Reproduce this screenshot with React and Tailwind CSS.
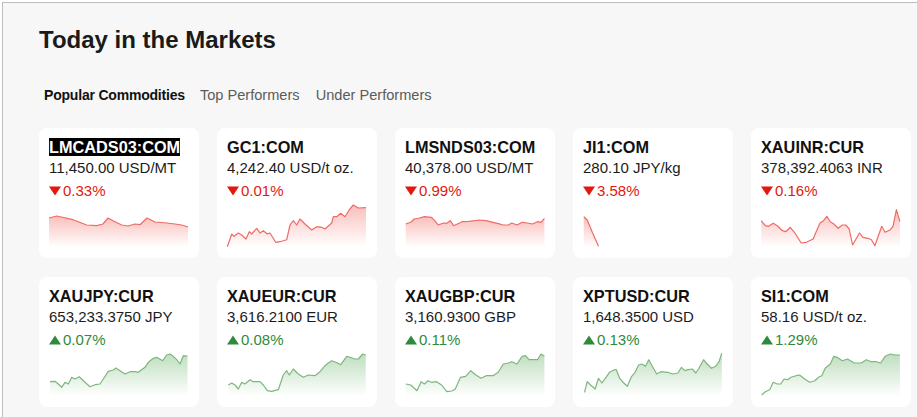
import React from 'react';

const RED = { line: '#ee6b66', fill: '#f7a9a5', text: 'text-[#e3170d]' };
const GREEN = { line: '#7fb67f', fill: '#a9d3a9', text: 'text-[#2f8a3b]' };

const items = [
  {
    id: 'lmcads',
    ticker: 'LMCADS03:COM',
    price: '11,450.00 USD/MT',
    change: '0.33%',
    up: false,
    selected: true,
    pts: [[0,16],[7.7,14],[24,17.7],[37.7,23],[47.7,23.7],[54,22],[59,16],[64,18.7],[72.7,23],[79,24],[86,22],[91,22.7],[98,16],[106,20],[117.7,21],[126,22],[132.7,23],[139,25]],
  },
  {
    id: 'gc1',
    ticker: 'GC1:COM',
    price: '4,242.40 USD/t oz.',
    change: '0.01%',
    up: false,
    pts: [[0.3,44.7],[4.7,32],[7,34.3],[11.3,31],[14.7,33],[19,37],[22.3,29.7],[24.7,32],[29.7,26.3],[33,31],[36.3,28.7],[40.3,32],[43,31],[48.7,40.3],[53,39.7],[59.7,37.7],[63,23],[66.3,18.7],[69.7,23],[73,17],[78,22],[84.7,28],[89.7,24.7],[94.7,25.3],[98,27],[104.7,21],[106.3,14.7],[109.7,14.7],[113.7,11.3],[118,14.7],[122.3,7.7],[126.3,3],[131.3,6],[139,5.7]],
  },
  {
    id: 'lmsnds',
    ticker: 'LMSNDS03:COM',
    price: '40,378.00 USD/MT',
    change: '0.99%',
    up: false,
    pts: [[0.7,22],[5.8,20.3],[9.2,17],[14.4,16],[19.5,14.7],[26.4,15.3],[29.8,18.7],[33.2,23],[38.4,21],[41.8,21.3],[45.2,18.7],[48.6,23.7],[57.2,19.7],[64,19.3],[74.3,18],[81.2,18.7],[88,20.3],[93.2,21.7],[98.3,23],[103.4,23],[106.8,21],[112,23],[117.1,20.3],[122.3,21],[127.4,22],[132.5,19.7],[136,20.3],[139.4,16.3]],
  },
  {
    id: 'ji1',
    ticker: 'JI1:COM',
    price: '280.10 JPY/kg',
    change: '3.58%',
    up: false,
    pts: [[0.8,14.7],[4.2,18],[9.3,30.3],[15.5,44.3]],
  },
  {
    id: 'xauinr',
    ticker: 'XAUINR:CUR',
    price: '378,392.4063 INR',
    change: '0.16%',
    up: false,
    pts: [[0.2,18.7],[4.3,23.7],[7.7,24.3],[12.2,21.3],[16.3,23.7],[21.4,28.7],[24.8,29.7],[29.3,25.3],[33.4,30.3],[40.2,41],[45.4,40.3],[52.2,37],[55.6,28.7],[59.1,21],[62.5,18.7],[65.9,14.3],[69.3,19.7],[72.8,22],[77.2,26.3],[81.3,23],[84.8,23],[88.2,27],[91.6,43],[98.5,31],[101.9,35.3],[107,36.3],[110.4,37.7],[113.9,43.7],[120.7,24.3],[124.1,30.3],[129.3,27.7],[132,24.3],[135.4,7.7],[138.9,19.7]],
  },
  {
    id: 'xaujpy',
    ticker: 'XAUJPY:CUR',
    price: '653,233.3750 JPY',
    change: '0.07%',
    up: true,
    pts: [[1,30.7],[6,30.3],[9.3,33],[12.7,36.3],[16,31.3],[19.3,33],[22.7,26.3],[26,28],[30.3,25.7],[36,31.3],[41,35.7],[46,33.7],[51,33],[54.3,28],[59.3,20.3],[64.3,19],[67,17],[71,19.7],[76,23],[81,20.7],[86,20.7],[89.3,21.3],[96,16.3],[99.3,11.3],[104.3,7.3],[107.7,6.3],[113.7,9.7],[117.7,4],[121,3],[124.3,5.3],[127.7,8.7],[131,13],[134.3,4.7],[138.5,5]],
  },
  {
    id: 'xaueur',
    ticker: 'XAUEUR:CUR',
    price: '3,616.2100 EUR',
    change: '0.08%',
    up: true,
    pts: [[1.3,34],[4.7,32],[8,34],[11.3,38],[14.7,31.3],[18,33],[23,28.7],[26.3,30.7],[33,30.7],[36.3,34],[40.3,39.7],[44.7,40.3],[51.3,38.7],[56.3,24],[59.7,19.7],[62.3,24],[66.3,18],[71.3,23],[76.3,26.3],[81.3,24],[88,24.7],[93,20.7],[98,14.7],[101.3,12],[104.7,9.7],[109,11.3],[113.7,13.7],[119.7,5.3],[123,6.3],[128,8],[131.3,8],[135.7,3],[138.7,4]],
  },
  {
    id: 'xaugbp',
    ticker: 'XAUGBP:CUR',
    price: '3,160.9300 GBP',
    change: '0.11%',
    up: true,
    pts: [[0.7,33],[5.8,34],[12,39.7],[16.1,30.7],[19.5,33],[23,29.7],[26.4,31.3],[31.5,30.7],[36.6,34],[41.8,40.7],[46.9,40],[50.3,38],[55.5,26.3],[60.6,25.3],[65.8,19.7],[70.9,24],[76,27.3],[81.2,24.7],[88,24.7],[93.2,21.3],[98.3,13],[103.4,12],[106.8,10.7],[112,13],[117.1,5.3],[120.5,4.7],[124,8.7],[129.1,8.7],[132.5,8.7],[136,3],[139.4,5.3]],
  },
  {
    id: 'xptusd',
    ticker: 'XPTUSD:CUR',
    price: '1,648.3500 USD',
    change: '0.13%',
    up: true,
    pts: [[1.5,41.3],[4.2,30.7],[7.6,34],[12.1,38],[15.5,27.3],[18.9,32],[23,26.3],[26.5,21.3],[31.6,18.7],[33.3,18.7],[36.7,27.3],[40.8,32],[44.3,35.3],[48.7,25.3],[52.1,21.3],[55.6,14],[59,13],[62.4,15.3],[65.8,8.7],[69.3,15.3],[73.7,23],[77.8,20.7],[84.7,21.3],[89.8,23],[95,22],[98.4,16.3],[101.8,19.7],[105.2,18.7],[109.3,18],[112.8,22],[115.5,18],[120.6,8.7],[124.1,13],[128.5,17.3],[132.6,15.3],[136,10.7],[138.8,2.3]],
  },
  {
    id: 'si1',
    ticker: 'SI1:COM',
    price: '58.16 USD/t oz.',
    change: '1.29%',
    up: true,
    pts: [[0.8,44],[4.3,40.7],[8.7,38.7],[12.2,31.3],[16.3,33],[19.7,33],[23.1,28],[26.5,28.7],[30,26.3],[35.1,24.7],[38.5,24],[43.7,28],[48.8,31.3],[53.9,29.7],[57.4,26.3],[60.8,24.7],[64.2,17.3],[69.3,13],[72.8,5.3],[76.2,6.3],[81.3,9.7],[86.5,8],[93.3,12],[100.2,12],[105.3,8.7],[110.4,10.7],[115.6,10.7],[119.7,12],[124.1,5.3],[129.3,3],[134.4,4],[138.9,4]],
  },
];

function Sparkline({ id, pts, up }) {
  const c = up ? GREEN : RED;
  const line = pts.map(([x, y], i) => `${i ? 'L' : 'M'}${x} ${y}`).join(' ');
  const first = pts[0];
  const last = pts[pts.length - 1];
  const area = `${line} L${last[0]} 45 L${first[0]} 45 Z`;
  return (
    <svg width="140" height="46" viewBox="0 0 140 46" className="block overflow-visible">
      <defs>
        <linearGradient id={`g-${id}`} x1="0" y1="0" x2="0" y2="1">
          <stop offset="0%" stopColor={c.fill} stopOpacity="0.75" />
          <stop offset="100%" stopColor={c.fill} stopOpacity="0" />
        </linearGradient>
      </defs>
      <path d={area} fill={`url(#g-${id})`} />
      <path d={line} fill="none" stroke={c.line} strokeWidth="1.2" strokeLinejoin="round" />
    </svg>
  );
}

function Arrow({ up }) {
  return up ? (
    <svg width="12" height="10" viewBox="0 0 12 10" className="shrink-0">
      <polygon points="0,9.5 12,9.5 6,0.5" fill="#2f8a3b" />
    </svg>
  ) : (
    <svg width="12" height="10" viewBox="0 0 12 10" className="shrink-0">
      <polygon points="0,0.5 12,0.5 6,9.5" fill="#e3170d" />
    </svg>
  );
}

function Card({ item }) {
  const c = item.up ? GREEN : RED;
  return (
    <div className="h-[130px] rounded-lg bg-white pt-[9px] px-[10px]">
      <div className="text-[16.3px] leading-[20px] font-bold text-[#111]">
        <span className={item.selected ? 'bg-black text-white' : ''}>{item.ticker}</span>
      </div>
      <div className="mt-[1px] text-[15px] leading-[20px] text-[#1c1c1c]">{item.price}</div>
      <div className={`mt-[3px] flex items-center gap-[2px] text-[15px] leading-[20px] ${c.text}`}>
        <Arrow up={item.up} />
        <span>{item.change}</span>
      </div>
      <div className="mt-[1px]">
        <Sparkline id={item.id} pts={item.pts} up={item.up} />
      </div>
    </div>
  );
}

export default function App() {
  return (
    <div className="min-h-screen bg-white pt-[2px] pl-[2px] font-['Liberation_Sans',Arial,sans-serif]">
      <div className="min-h-[415px] border-t border-l border-[#bdbdbd] bg-[#f7f7f7] pl-[36px] pt-[21px]">
        <h2 className="text-[24px] leading-[32px] font-bold text-[#1a1a1a]">Today in the Markets</h2>

        <div className="mt-[29px] flex text-[14.6px] leading-[20px]">
          <button className="ml-[5px] text-[14px] font-semibold tracking-[-0.2px] text-[#111]">Popular Commodities</button>
          <button className="ml-[15px] text-[#5b5b5b]">Top Performers</button>
          <button className="ml-[16px] text-[#5b5b5b]">Under Performers</button>
        </div>

        <div className="mt-[23px] grid grid-cols-[repeat(5,160px)] gap-x-[18px] gap-y-[19px]">
          {items.map((item) => (
            <Card key={item.id} item={item} />
          ))}
        </div>
      </div>
    </div>
  );
}
